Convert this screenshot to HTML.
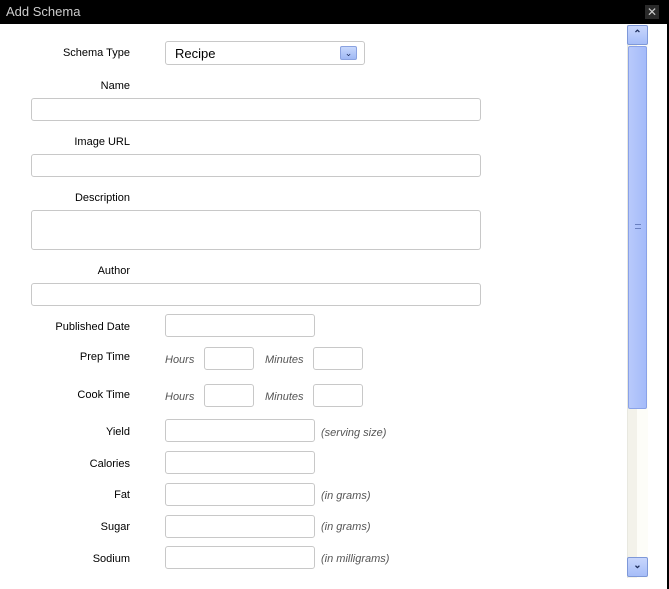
<!DOCTYPE html>
<html><head><style>
*{margin:0;padding:0;box-sizing:border-box}
body{width:669px;height:589px;background:#fff;font-family:"Liberation Sans",sans-serif;position:relative;overflow:hidden}
.t{position:absolute;left:0;top:0;width:669px;height:24px;background:#000;color:#ccc;font-size:13px;line-height:24px;padding-left:6px}
.x{position:absolute;right:10px;top:5px;width:14px;height:14px;background:#2a2a2a;color:#ccc;font-size:12px;line-height:14px;text-align:center}
.rb{position:absolute;right:0;top:24px;width:2px;height:565px;background:#000}
.l{position:absolute;font-size:11px;color:#000;text-align:right;width:130px;left:0}
.i{position:absolute;border:1px solid #c8c8c8;border-radius:3px;background:#fff;height:23px}
.h{position:absolute;font-size:11px;color:#555;font-style:italic}
.sb{position:absolute;left:627px;top:25px;width:21px;height:553px;background:linear-gradient(90deg,#f3f2ea 0 9px,#fdfdf8 9px);border-left:1px solid #e8e8e0}
.btn{position:absolute;left:627px;width:21px;height:20px;background:linear-gradient(#c8d6fc,#a6bdf8);border:1px solid #7e98d8;border-radius:2px;text-align:center;color:#1c2c5a;font-size:10px;line-height:18px;font-weight:bold}
.th{position:absolute;left:628px;top:46px;width:19px;height:363px;background:linear-gradient(90deg,#b8c9fb,#a4bbfa);border:1px solid #8aa2e8;border-radius:2px}
</style></head><body>
<div class="t">Add Schema</div><div class="x">✕</div>
<div class="rb"></div>
<div class="sb"></div>
<div class="btn" style="top:25px">&#x2303;</div>
<div class="th"><div style="position:absolute;top:177px;left:6px;width:6px;height:5px;border-top:1px solid #6a80c0;border-bottom:1px solid #6a80c0"></div></div>
<div class="btn" style="top:557px;line-height:16px">&#x2304;</div>

<div class="l" style="top:47px">Schema Type</div>
<div class="i" style="left:165px;top:41px;width:200px;height:24px;font-size:13px;padding:4px 9px">Recipe<div style="position:absolute;right:7px;top:4px;width:17px;height:14px;background:linear-gradient(#c8d8fc,#9fb8f4);border:1px solid #8aa2e0;border-radius:2px;font-size:9px;line-height:12px;text-align:center;color:#1c2c5a">&#x2304;</div></div>

<div class="l" style="top:80px">Name</div>
<div class="i" style="left:31px;top:98px;width:450px"></div>
<div class="l" style="top:136px">Image URL</div>
<div class="i" style="left:31px;top:154px;width:450px"></div>
<div class="l" style="top:192px">Description</div>
<div class="i" style="left:31px;top:210px;width:450px;height:40px"></div>
<div class="l" style="top:265px">Author</div>
<div class="i" style="left:31px;top:283px;width:450px"></div>

<div class="l" style="top:321px">Published Date</div>
<div class="i" style="left:165px;top:314px;width:150px"></div>

<div class="l" style="top:351px">Prep Time</div>
<div class="h" style="left:165px;top:354px">Hours</div>
<div class="i" style="left:204px;top:347px;width:50px"></div>
<div class="h" style="left:265px;top:354px">Minutes</div>
<div class="i" style="left:313px;top:347px;width:50px"></div>

<div class="l" style="top:389px">Cook Time</div>
<div class="h" style="left:165px;top:391px">Hours</div>
<div class="i" style="left:204px;top:384px;width:50px"></div>
<div class="h" style="left:265px;top:391px">Minutes</div>
<div class="i" style="left:313px;top:384px;width:50px"></div>

<div class="l" style="top:426px">Yield</div>
<div class="i" style="left:165px;top:419px;width:150px"></div>
<div class="h" style="left:321px;top:427px">(serving size)</div>

<div class="l" style="top:458px">Calories</div>
<div class="i" style="left:165px;top:451px;width:150px"></div>

<div class="l" style="top:489px">Fat</div>
<div class="i" style="left:165px;top:483px;width:150px"></div>
<div class="h" style="left:321px;top:490px">(in grams)</div>

<div class="l" style="top:521px">Sugar</div>
<div class="i" style="left:165px;top:515px;width:150px"></div>
<div class="h" style="left:321px;top:521px">(in grams)</div>

<div class="l" style="top:553px">Sodium</div>
<div class="i" style="left:165px;top:546px;width:150px"></div>
<div class="h" style="left:321px;top:553px">(in milligrams)</div>
</body></html>
